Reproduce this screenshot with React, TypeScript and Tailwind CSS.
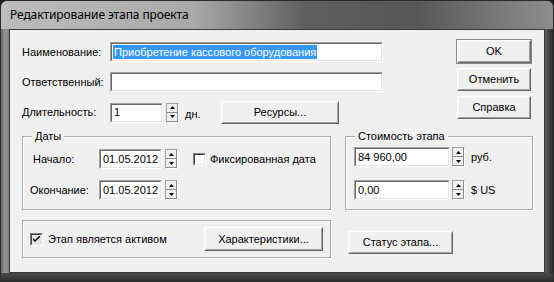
import React from "react";

const Sunken = ({ className = "", children }: { className?: string; children?: React.ReactNode }) => (
  <div className={`border border-t-[#a0a0a0] border-l-[#a0a0a0] border-b-white border-r-white ${className}`}>
    <div className="h-full w-full border border-t-[#696969] border-l-[#696969] border-b-[#e3e3e3] border-r-[#e3e3e3] bg-white flex items-center pl-[1px] overflow-hidden whitespace-nowrap">
      {children}
    </div>
  </div>
);

const Btn = ({ className = "", children }: { className?: string; children?: React.ReactNode }) => (
  <div className={`border border-t-white border-l-white border-b-[#696969] border-r-[#696969] bg-[#f0f0f0] ${className}`}>
    <div className="h-full w-full border border-t-[#f4f4f4] border-l-[#f4f4f4] border-b-[#a0a0a0] border-r-[#a0a0a0] flex items-center justify-center whitespace-nowrap">
      {children}
    </div>
  </div>
);

const Spin = ({ className = "" }: { className?: string }) => (
  <div className={`w-[13px] h-[20px] flex flex-col border border-t-[#a0a0a0] border-l-[#a0a0a0] border-b-white border-r-white ${className}`}>
    <div className="flex-1 flex items-center justify-center bg-[#f0f0f0] border-b border-r border-b-[#8a8a8a] border-r-[#8a8a8a]">
      <svg width="5" height="3" viewBox="0 0 5 3">
        <path d="M2.5 0 L5 3 L0 3 Z" fill="#000" />
      </svg>
    </div>
    <div className="flex-1 flex items-center justify-center bg-[#f0f0f0] border-b border-r border-b-[#8a8a8a] border-r-[#8a8a8a]">
      <svg width="5" height="3" viewBox="0 0 5 3">
        <path d="M0 0 L5 0 L2.5 3 Z" fill="#000" />
      </svg>
    </div>
  </div>
);

const Group = ({ legend, className = "", children }: { legend?: string; className?: string; children?: React.ReactNode }) => (
  <div className={`relative border border-[#a9a9a9] shadow-[inset_1px_1px_0_#ffffff,1px_1px_0_#ffffff] ${className}`}>
    {legend && (
      <span className="absolute top-[-7px] left-[9px] bg-[#f0f0f0] px-[3px] leading-[13px]">{legend}</span>
    )}
    {children}
  </div>
);

const Check = ({ checked = false, className = "" }: { checked?: boolean; className?: string }) => (
  <div className={`w-[13px] h-[13px] border border-t-[#808080] border-l-[#808080] border-b-white border-r-white ${className}`}>
    <div className={`w-full h-full border border-t-[#404040] border-l-[#404040] border-b-[#e3e3e3] border-r-[#e3e3e3] flex items-center justify-center ${checked ? "bg-[#e6e6e6]" : "bg-white"}`}>
      {checked && (
        <svg width="7" height="7" viewBox="0 0 7 7">
          <path d="M0 2 L0 4 L2 6 L7 1 L7 -1 L2 4 Z" fill="#000" />
        </svg>
      )}
    </div>
  </div>
);

export default function App() {
  return (
    <div className="w-[554px] h-[282px] bg-[#1c1c1c] font-['Liberation_Sans',Arial,sans-serif] text-[11px] text-black">
      <div className="w-[554px] h-[282px] flex flex-col rounded-t-[7px] overflow-hidden border border-[#2a2a2a] bg-[#555]">
        {/* title bar */}
        <div className="h-[28px] flex items-center pl-[9px] pb-[1px] bg-[linear-gradient(90deg,#bcbcbc_0%,#a9a9a9_35%,#5f5f5f_55%,#575757_75%,#8e8e8e_100%)]">
          <span className="text-[12px] text-black font-['Noto_Sans',sans-serif] tracking-[-0.1px]">Редактирование этапа проекта</span>
        </div>
        <div className="flex flex-1">
          <div className="w-[8px] bg-[linear-gradient(90deg,#6a6a6a,#9a9a9a_60%,#7a7a7a)]" />
          {/* client */}
          <div className="w-[536px] h-[244px] border border-[#3a3a3a] bg-[#f0f0f0] flex flex-col">
            {/* top section */}
            <div className="flex mt-[10px]">
              <div className="flex flex-col pl-[12px] pt-[2px]">
                <div className="flex items-center h-[20px]">
                  <span className="w-[88px]">Наименование:</span>
                  <Sunken className="w-[273px] h-[20px]">
                    <span className="bg-[#3399ff] text-white pl-[1px] pr-[1px] leading-[14px]">Приобретение кассового оборудования</span>
                  </Sunken>
                </div>
                <div className="flex items-center h-[20px] mt-[10px]">
                  <span className="w-[88px]">Ответственный:</span>
                  <Sunken className="w-[273px] h-[20px]" />
                </div>
                <div className="flex items-center h-[23px] mt-[9px]">
                  <span className="w-[88px]">Длительность:</span>
                  <Sunken className="w-[53px] h-[20px]">
                    <span className="pl-[1px]">1</span>
                  </Sunken>
                  <Spin className="ml-[3px]" />
                  <span className="ml-[6px] w-[36px] pt-[3px]">дн.</span>
                  <Btn className="w-[118px] h-[23px]">Ресурсы...</Btn>
                </div>
              </div>
              <div className="flex flex-col ml-[74px] gap-[5px]">
                <Btn className="w-[74px] h-[23px] outline outline-1 outline-[#8a8a8a]">OK</Btn>
                <Btn className="w-[74px] h-[23px]">Отменить</Btn>
                <Btn className="w-[74px] h-[23px]">Справка</Btn>
              </div>
            </div>
            {/* groups */}
            <div className="flex mt-[12px]">
              <Group legend="Даты" className="ml-[12px] w-[309px] h-[74px]">
                <div className="flex items-center mt-[12px] h-[20px]">
                  <span className="pl-[10px] w-[76px]">Начало:</span>
                  <Sunken className="w-[63px] h-[20px]">
                    <span className="pl-[1px]">01.05.2012</span>
                  </Sunken>
                  <Spin className="ml-[3px]" />
                  <Check className="ml-[15px]" />
                  <span className="ml-[4px]">Фиксированная дата</span>
                </div>
                <div className="flex items-center mt-[11px] h-[20px]">
                  <span className="pl-[7px] w-[76px]">Окончание:</span>
                  <Sunken className="w-[63px] h-[20px]">
                    <span className="pl-[1px]">01.05.2012</span>
                  </Sunken>
                  <Spin className="ml-[3px]" />
                </div>
              </Group>
              <Group legend="Стоимость этапа" className="ml-[14px] w-[188px] h-[74px]">
                <div className="flex items-center mt-[10px] pl-[8px] h-[20px]">
                  <Sunken className="w-[96px] h-[20px]">
                    <span className="pl-[1px]">84 960,00</span>
                  </Sunken>
                  <Spin className="ml-[2px]" />
                  <span className="ml-[6px]">руб.</span>
                </div>
                <div className="flex items-center mt-[13px] pl-[8px] h-[20px]">
                  <Sunken className="w-[96px] h-[20px]">
                    <span className="pl-[1px]">0,00</span>
                  </Sunken>
                  <Spin className="ml-[2px]" />
                  <span className="ml-[6px]">$ US</span>
                </div>
              </Group>
            </div>
            {/* bottom */}
            <div className="flex mt-[10px] items-start">
              <Group className="ml-[12px] w-[309px] h-[38px] flex items-center">
                <Check checked className="ml-[7px]" />
                <span className="ml-[5px]">Этап является активом</span>
                <Btn className="ml-auto mr-[7px] w-[119px] h-[24px]">Характеристики...</Btn>
              </Group>
              <Btn className="ml-[17px] mt-[11px] w-[105px] h-[23px]">Статус этапа...</Btn>
            </div>
          </div>
          <div className="w-[8px] bg-[linear-gradient(90deg,#5a5a5a,#3e3e3e_60%,#2a2a2a)]" />
        </div>
        <div className="h-[8px] bg-[linear-gradient(180deg,#4a4a4a,#2e2e2e)]" />
      </div>
    </div>
  );
}
